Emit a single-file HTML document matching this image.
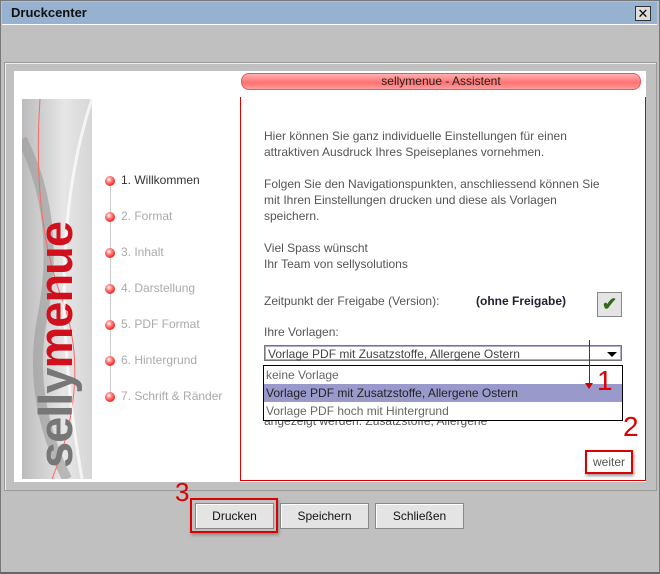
<!DOCTYPE html><html><head><style>
body{margin:0;width:660px;height:573px;background:#c0c0c0;font-family:"Liberation Sans",sans-serif;position:relative;overflow:hidden}
.a{position:absolute}
.t{font-size:12px;color:#555;white-space:nowrap}
.btn{position:absolute;top:503px;height:24px;background:#e4e4e4;border:1px solid #888;box-shadow:inset 1px 1px 0 #fff;font-size:12px;color:#111;text-align:center;line-height:24px}
.dot{position:absolute;left:105px;width:10px;height:10px;border-radius:50%;background:radial-gradient(circle at 40% 35%,#fff 0,#f88 30%,#e11 80%)}
.st{position:absolute;left:121px;font-size:12px;color:#aaa}
</style></head><body>
<div class="a" style="left:0;top:0;width:658px;height:571px;border:1px solid #777;border-right:2px solid #777;border-bottom:2px solid #666"></div>
<div class="a" style="left:2px;top:2px;width:655px;height:22px;background:#96b2d0;border-bottom:1px solid #fff"></div>
<div class="a" style="left:11px;top:5px;font-size:13px;font-weight:bold;color:#111">Druckcenter</div>
<div class="a" style="left:635px;top:6px;width:14px;height:13px;background:#ddd;border:1px solid #333;font-size:13px;line-height:13px;text-align:center;color:#000">✕</div>
<div class="a" style="left:4px;top:62px;width:651px;height:427px;border:1px solid #999;box-shadow:inset 1px 1px 0 #eee"></div>
<div class="a" style="left:14px;top:71px;width:632px;height:411px;background:#fff"></div>
<div class="a" style="left:22px;top:99px;width:70px;height:380px;background:linear-gradient(90deg,#bbb,#e6e6e6 60%,#d6d6d6);overflow:hidden">
<svg width="70" height="380" style="position:absolute;left:0;top:0"><path d="M0 40 Q40 120 20 220 Q5 300 45 380" stroke="#999" stroke-width="10" fill="none" opacity=".6"/><path d="M18 0 Q10 120 40 200 Q70 280 30 380" stroke="#f66" stroke-width="1" fill="none"/><path d="M70 0 Q20 150 60 380" stroke="#fff" stroke-width="3" fill="none" opacity=".7"/></svg>
<div class="a" style="left:-116px;top:216px;width:300px;height:60px;transform:rotate(-90deg);font-size:47px;font-weight:bold;line-height:60px;white-space:nowrap;text-align:center;letter-spacing:-1px"><span style="color:#777">selly</span><span style="color:#d0101c">menue</span></div>
</div>
<div class="a" style="left:110px;top:186px;width:1px;height:210px;background:#ccc"></div>
<div class="dot" style="top:176px"></div><div class="st" style="top:173px;color:#333">1. Willkommen</div>
<div class="dot" style="top:212px"></div><div class="st" style="top:209px">2. Format</div>
<div class="dot" style="top:248px"></div><div class="st" style="top:245px">3. Inhalt</div>
<div class="dot" style="top:284px"></div><div class="st" style="top:281px">4. Darstellung</div>
<div class="dot" style="top:320px"></div><div class="st" style="top:317px">5. PDF Format</div>
<div class="dot" style="top:356px"></div><div class="st" style="top:353px">6. Hintergrund</div>
<div class="dot" style="top:392px"></div><div class="st" style="top:389px">7. Schrift &amp; Ränder</div>
<div class="a" style="left:241px;top:73px;width:398px;height:15px;border:1px solid #e55;border-radius:8px;background:linear-gradient(#ffb0b0,#ff7070 60%,#ffa0a0);font-size:12px;text-align:center;line-height:15px;color:#222">sellymenue - Assistent</div>
<div class="a" style="left:240px;top:97px;width:404px;height:383px;border-left:1px solid #d00;border-right:1px solid #d00;border-bottom:1px solid #d00"></div>
<div class="a t" style="left:264px;top:128px;line-height:16px">Hier können Sie ganz individuelle Einstellungen für einen<br>attraktiven Ausdruck Ihres Speiseplanes vornehmen.<br><br>Folgen Sie den Navigationspunkten, anschliessend können Sie<br>mit Ihren Einstellungen drucken und diese als Vorlagen<br>speichern.<br><br>Viel Spass wünscht<br>Ihr Team von sellysolutions</div>
<div class="a t" style="left:264px;top:294px">Zeitpunkt der Freigabe (Version):</div>
<div class="a" style="left:476px;top:294px;font-size:12px;font-weight:bold;color:#223">(ohne Freigabe)</div>
<div class="a" style="left:597px;top:292px;width:23px;height:23px;background:#e4e4e4;border:1px solid #888;color:#2f6a1a;font-size:18px;font-weight:bold;text-align:center;line-height:23px">✔</div>
<div class="a t" style="left:264px;top:325px">Ihre Vorlagen:</div>
<div class="a" style="left:264px;top:345px;height:16px;border:1px solid #777;box-shadow:inset 0 0 0 1px #aac;font-size:12px;color:#444;line-height:16px;padding-left:3px;box-sizing:border-box;width:358px">Vorlage PDF mit Zusatzstoffe, Allergene Ostern<span style="position:absolute;right:4px;top:6px;border:5px solid transparent;border-top:5px solid #000;border-bottom:0"></span></div>
<div class="a t" style="left:264px;top:414px">angezeigt werden: Zusatzstoffe, Allergene</div>
<div class="a" style="left:263px;top:365px;width:358px;height:54px;border:1px solid #000;background:#fff;font-size:12px;line-height:18px">
<div style="padding-left:2px;color:#666">keine Vorlage</div>
<div style="padding-left:2px;background:#9999cc;color:#222">Vorlage PDF mit Zusatzstoffe, Allergene Ostern</div>
<div style="padding-left:2px;color:#666">Vorlage PDF hoch mit Hintergrund</div></div>
<div class="a" style="left:589px;top:340px;width:1px;height:45px;background:#c00"></div>
<div class="a" style="left:585px;top:383px;border:4px solid transparent;border-top:6px solid #c00;border-bottom:0"></div>
<div class="a" style="left:597px;top:365px;font-size:28px;color:#d00">1</div>
<div class="a" style="left:623px;top:411px;font-size:28px;color:#d00">2</div>
<div class="a" style="left:585px;top:450px;width:44px;height:20px;border:2px solid #d00;box-shadow:1px 2px 3px #999;background:#fff;font-size:12px;color:#555;text-align:center;line-height:20px">weiter</div>
<div class="a" style="left:175px;top:477px;font-size:26px;color:#d00">3</div>
<div class="a" style="left:190px;top:498px;width:84px;height:31px;border:2px solid #d00;box-shadow:1px 2px 3px #888"></div>
<div class="btn" style="left:195px;width:77px">Drucken</div>
<div class="btn" style="left:280px;width:87px">Speichern</div>
<div class="btn" style="left:375px;width:87px">Schließen</div>
</body></html>
